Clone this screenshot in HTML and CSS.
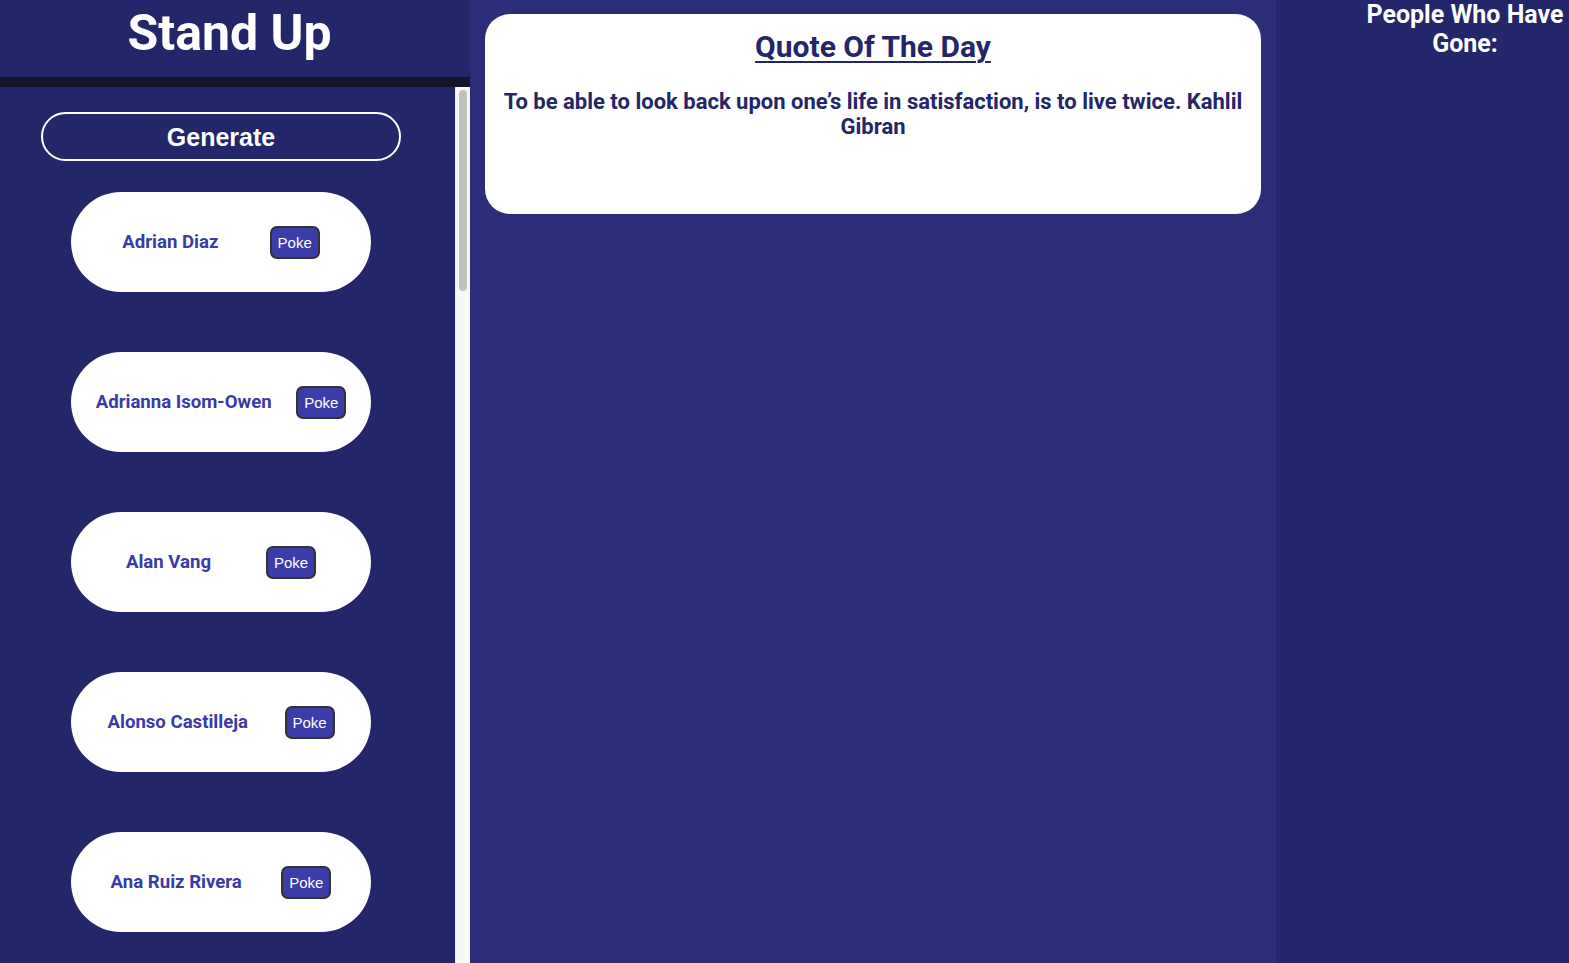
FILE: index.html
```html
<!DOCTYPE html>
<html lang="en">
<head>
<meta charset="utf-8">
<title>Stand Up</title>
<link rel="stylesheet" href="styles.css">
</head>
<body>
<div class="app">
  <aside class="left">
    <header class="header"><h1 class="title">Stand Up</h1></header>
    <div class="bar"></div>
    <div class="list">
      <div class="list-inner">
        <button class="generate">Generate</button>
        <div class="card"><span class="name">Adrian Diaz</span><button class="poke">Poke</button></div>
        <div class="card"><span class="name">Adrianna Isom-Owen</span><button class="poke">Poke</button></div>
        <div class="card"><span class="name">Alan Vang</span><button class="poke">Poke</button></div>
        <div class="card"><span class="name">Alonso Castilleja</span><button class="poke">Poke</button></div>
        <div class="card"><span class="name">Ana Ruiz Rivera</span><button class="poke">Poke</button></div>
      </div>
      <div class="scrollbar"><div class="thumb"></div></div>
    </div>
  </aside>
  <main class="middle">
    <section class="quote-card">
      <h2 class="quote-title">Quote Of The Day</h2>
      <p class="quote-text">To be able to look back upon one’s life in satisfaction, is to live twice. Kahlil Gibran</p>
    </section>
  </main>
  <aside class="right">
    <h2 class="gone-title">People Who Have Gone:</h2>
  </aside>
</div>
</body>
</html>
```

FILE: styles.css
```css
* { box-sizing: border-box; }

html, body {
  margin: 0;
  padding: 0;
  height: 100%;
  overflow: hidden;
}

body {
  font-family: Roboto, "Liberation Sans", sans-serif;
  background: #2b2d79;
}

.app {
  display: flex;
  height: 100vh;
}

.left {
  width: 470px;
  flex: 0 0 470px;
  display: flex;
  flex-direction: column;
  background: #232668;
}

.header {
  height: 77px;
  padding: 4px 11px 0 0;
  text-align: center;
}

.title {
  margin: 0;
  font-size: 50px;
  font-weight: 700;
  line-height: normal;
  color: #ffffff;
}

.bar {
  height: 10px;
  background: #15152a;
}

.list {
  flex: 1;
  min-height: 0;
  display: flex;
  overflow: hidden;
  background: #232668;
}

.list-inner {
  width: 455px;
  padding: 25px 13px 0 0;
  display: flex;
  flex-direction: column;
  align-items: center;
  gap: 60px;
}

.scrollbar {
  width: 15px;
  flex: 0 0 15px;
  background: #f8f8f8;
  border-left: 1px solid #ededed;
  padding: 3px 0 0 3px;
}

.thumb {
  width: 8px;
  height: 201px;
  border-radius: 4px;
  background: #c1c1c1;
}

.generate {
  width: 360px;
  height: 49px;
  flex: 0 0 49px;
  margin-bottom: -29px;
  border: 2px solid #ffffff;
  border-radius: 25px;
  background: transparent;
  color: #ffffff;
  font-family: "Liberation Sans", Arial, sans-serif;
  font-size: 25px;
  font-weight: 700;
  padding: 2px 0 0;
}

.card {
  width: 300px;
  height: 100px;
  flex: 0 0 100px;
  border-radius: 50px;
  background: #ffffff;
  display: flex;
  align-items: center;
  justify-content: space-evenly;
}

.name {
  font-size: 18.6px;
  font-weight: 700;
  color: #3a3aa8;
}

.poke {
  width: 50px;
  height: 33px;
  padding: 0;
  border: 2px solid #333333;
  border-radius: 7px;
  background: #3b3ca8;
  color: #ffffff;
  font-family: "Liberation Sans", Arial, sans-serif;
  font-size: 15px;
}

.middle {
  width: 806px;
  flex: 0 0 806px;
  padding: 14px 15px;
  background: #2b2d79;
}

.quote-card {
  height: 200px;
  background: #ffffff;
  border-radius: 25px;
  padding: 15px 16px 0;
  text-align: center;
  color: #232668;
}

.quote-title {
  margin: 0;
  font-size: 30px;
  font-weight: 700;
  line-height: normal;
  text-decoration: underline;
  text-decoration-thickness: 2px;
  text-underline-offset: 4px;
}

.quote-text {
  margin: 25px 0 0;
  font-size: 22px;
  font-weight: 700;
  line-height: normal;
}

.right {
  flex: 1;
  background: #23266a;
  padding-left: 84px;
}

.gone-title {
  width: 210px;
  margin: 0;
  padding-top: 1px;
  font-size: 25px;
  font-weight: 700;
  line-height: 28.5px;
  text-align: center;
  color: #ffffff;
}
```
